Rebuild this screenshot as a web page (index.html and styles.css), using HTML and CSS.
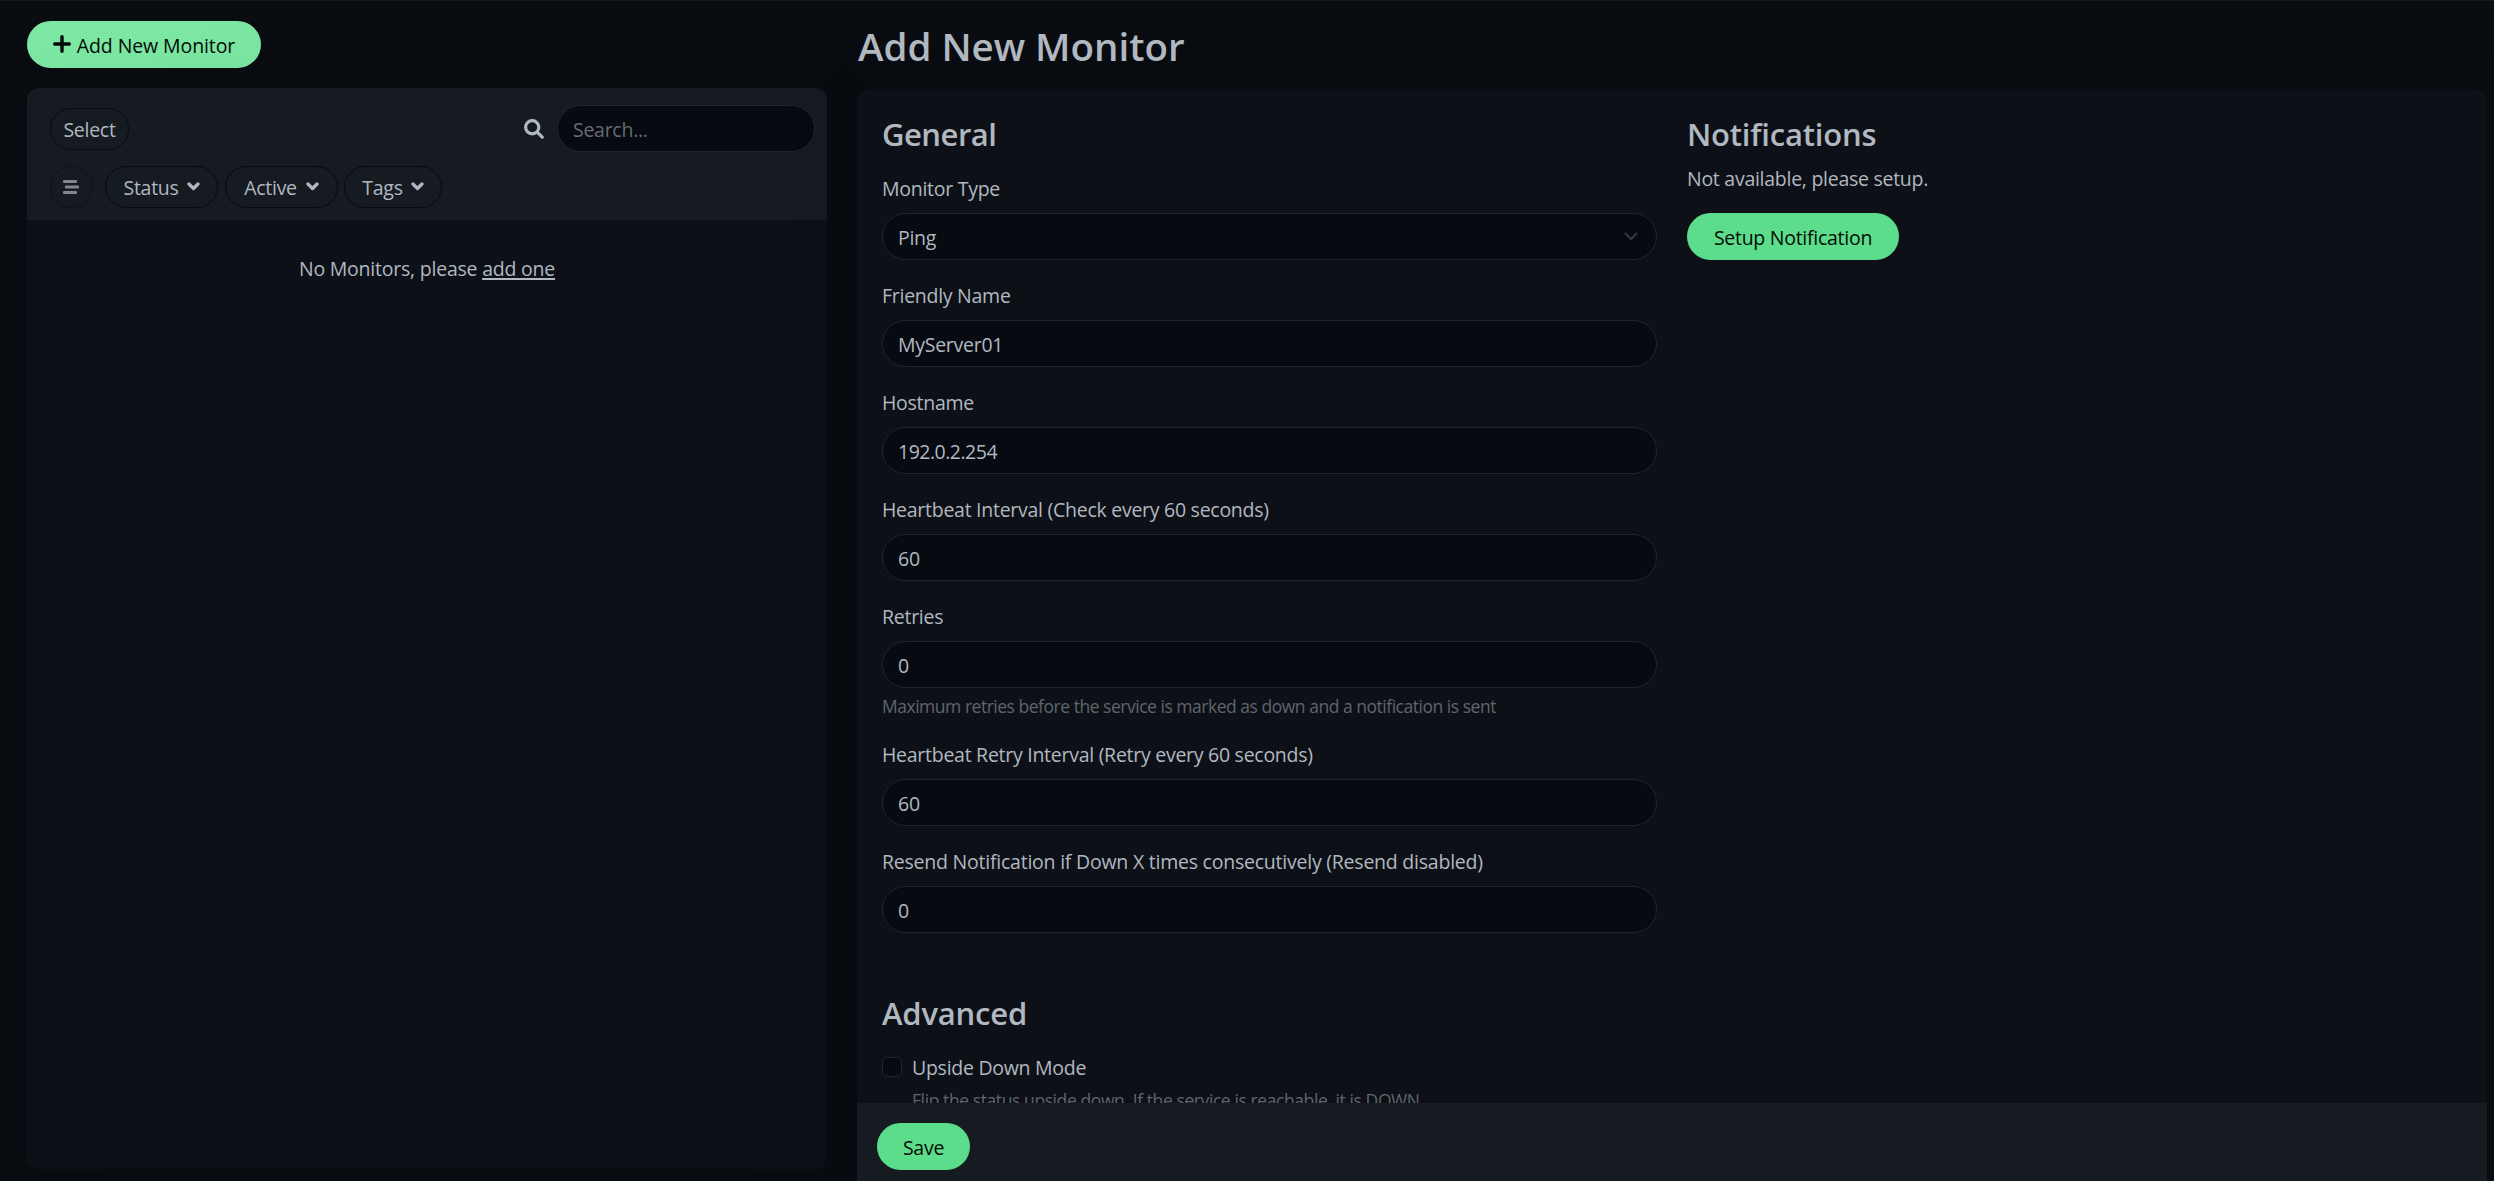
FILE: index.html
```html
<!DOCTYPE html>
<html lang="en">
<head>
<meta charset="utf-8">
<title>Add New Monitor</title>
<link rel="stylesheet" href="styles.css">
</head>
<body>
<div class="layout">
  <aside class="sidebar">
    <button class="btn btn-add"><svg class="icon-plus" viewBox="0 0 18 18"><path d="M9 1.700v14.600M1.700 9h14.600"/></svg><span>Add New Monitor</span></button>
    <section class="list">
      <header class="list-header">
        <div class="row row-search">
          <button class="pill pill-select"><span>Select</span></button>
          <div class="search">
            <svg class="icon-search" viewBox="0 0 20 20"><circle cx="8.200" cy="8.200" r="6.600"/><path d="M13.200 13.200l5 5"/></svg>
            <div class="input input-search"><span>Search...</span></div>
          </div>
        </div>
        <div class="row row-filter">
          <button class="pill pill-icon"><svg class="icon-bars" viewBox="0 0 16 14"><rect x="0" y="0" width="14" height="3" rx="1"/><rect x="2" y="5.500" width="14" height="3" rx="1"/><rect x="0" y="11" width="14" height="3" rx="1"/></svg></button>
          <button class="pill pill-status"><span>Status</span><svg class="icon-angle" viewBox="0 0 13 9"><path d="M2 2l4.500 4.500L11 2"/></svg></button>
          <button class="pill pill-active"><span>Active</span><svg class="icon-angle" viewBox="0 0 13 9"><path d="M2 2l4.500 4.500L11 2"/></svg></button>
          <button class="pill pill-tags"><span>Tags</span><svg class="icon-angle" viewBox="0 0 13 9"><path d="M2 2l4.500 4.500L11 2"/></svg></button>
        </div>
      </header>
      <p class="empty"><span>No Monitors, please <a>add one</a></span></p>
    </section>
  </aside>
  <main class="main">
    <h1>Add New Monitor</h1>
    <form class="card">
      <div class="columns">
        <div class="col">
          <h2>General</h2>
          <div class="field"><label>Monitor Type</label><div class="input input-select"><span>Ping</span><svg class="icon-chevron" viewBox="0 0 14 9"><path d="M1.500 1.500l5.500 5.500 5.500-5.500"/></svg></div></div>
          <div class="field"><label>Friendly Name</label><div class="input"><span>MyServer01</span></div></div>
          <div class="field"><label>Hostname</label><div class="input"><span class="ip">192.0.2.254</span></div></div>
          <div class="field"><label>Heartbeat Interval (Check every 60 seconds)</label><div class="input"><span>60</span></div></div>
          <div class="field field-help"><label>Retries</label><div class="input"><span>0</span></div><p class="help">Maximum retries before the service is marked as down and a notification is sent</p></div>
          <div class="field"><label>Heartbeat Retry Interval (Retry every 60 seconds)</label><div class="input"><span>60</span></div></div>
          <div class="field"><label class="resend">Resend Notification if Down X times consecutively (Resend disabled)</label><div class="input"><span>0</span></div></div>
          <h2 class="advanced">Advanced</h2>
          <div class="check"><i class="box"></i><div class="check-text"><label>Upside Down Mode</label><p class="help">Flip the status upside down. If the service is reachable, it is DOWN.</p></div></div>
        </div>
        <div class="col">
          <h2 class="notif">Notifications</h2>
          <p class="note">Not available, please setup.</p>
          <button type="button" class="btn btn-setup"><span>Setup Notification</span></button>
        </div>
      </div>
      <footer class="savebar"><button type="button" class="btn btn-save"><span>Save</span></button></footer>
    </form>
  </main>
</div>
</body>
</html>
```
FILE: styles.css
```css
* { box-sizing: border-box; }
body {
  margin: 0;
  height: 1181px;
  overflow: hidden;
  background: #090c10;
  border-top: 1px solid #161b22;
  color: #b1b8c0;
  font: 19.5px/30px "Open Sans", "Noto Sans", sans-serif;
  letter-spacing: -.27px;
}
h1, h2, p { margin: 0; }
span { white-space: nowrap; }
button { font: inherit; letter-spacing: inherit; color: inherit; padding: 0; border: 0; background: none; }
.layout { display: flex; gap: 30px; height: 1180px; padding: 0 7px 0 27px; }
.sidebar { width: 800px; padding-top: 20px; }
.btn { display: flex; align-items: center; justify-content: center; height: 47px; padding-top: 3px; border-radius: 24px; background: #5cdd8b; color: #020b05; }
.btn-add { width: 234px; gap: 6px; letter-spacing: -.1px; background: linear-gradient(135deg, #7ce8a4, #7ae6a2); }
.icon-plus { width: 18px; height: 18px; margin-top: -4px; fill: none; stroke: #020b05; stroke-width: 3.400; stroke-linecap: round; }
.list { height: 1081px; margin-top: 20px; border-radius: 12px; overflow: hidden; background: #0d1117; box-shadow: 0 15px 70px rgba(0, 0, 0, .1); }
.list-header { height: 132px; padding: 17px 12px 12px 23px; background: #161b22; }
.row { display: flex; align-items: center; }
.row-search { height: 47px; justify-content: space-between; }
.row-filter { margin-top: 14px; }
.pill { display: flex; align-items: center; justify-content: center; height: 42px; padding-top: 2px; border: 1px solid #070a10; border-radius: 21px; }
.pill-select { width: 79px; }
.pill-icon { width: 43px; margin-right: 12px; padding: 0; border-color: #0f1319; }
.pill-status, .pill-active { width: 113px; margin-right: 7px; gap: 9px; }
.pill-status { gap: 8px; }
.pill-active { margin-right: 6px; }
.pill-tags { width: 98px; gap: 8px; }
.icon-bars { width: 16px; height: 14px; margin-right: 1px; fill: #82878e; }
.icon-angle { width: 13px; height: 9px; margin-top: -3px; fill: none; stroke: #b1b8c0; stroke-width: 3.200; stroke-linecap: round; stroke-linejoin: round; }
.search { display: flex; align-items: center; gap: 13px; }
.icon-search { width: 20px; height: 20px; fill: none; stroke: #b1b8c0; stroke-width: 3.200; stroke-linecap: round; }
.input { display: flex; align-items: center; height: 47px; padding: 2px 15px 0; border: 1px solid #1d2634; border-radius: 24px; background: #070a10; }
.input-select { justify-content: space-between; padding-right: 18px; }
.icon-chevron { width: 14px; height: 9px; margin-top: -3px; fill: none; stroke: #343a40; stroke-width: 2; stroke-linecap: round; stroke-linejoin: round; }
.input-search { width: 258px; color: #666c73; }
.ip { letter-spacing: -.5px; }
.empty { margin-top: 34px; text-align: center; letter-spacing: -.22px; }
.empty a { text-decoration: underline; text-decoration-thickness: 2px; text-underline-offset: 2px; }
.main { width: 1630px; }
h1 { height: 88px; padding: 18px 0 0 1px; font-size: 38.5px; line-height: 54px; font-weight: 600; letter-spacing: 0; }
.card { height: 1092px; border-radius: 12px 12px 0 0; background: #0d1117; box-shadow: 0 15px 70px rgba(0, 0, 0, .1); overflow: hidden; }
.columns { display: grid; grid-template-columns: 775px 775px; column-gap: 30px; height: 1014px; padding: 23px 25px 0; overflow: hidden; }
h2 { height: 46px; font-size: 31px; line-height: 44px; font-weight: 600; letter-spacing: -.5px; }
h2.notif, h2.advanced { letter-spacing: -.2px; }
.field { height: 107px; padding-top: 14px; }
.field label { display: block; height: 41px; line-height: 33px; }
.field .resend { letter-spacing: -.23px; }
.field-help { height: 138px; }
.help { color: #5f656c; font-size: 17.5px; line-height: 24px; letter-spacing: -.48px; }
.field-help .help { padding-top: 6px; }
.advanced { margin-top: 53px; }
.check { display: flex; gap: 10px; margin-top: 17px; }
.box { width: 20px; height: 20px; margin-top: 3px; border: 1px solid #1d2634; border-radius: 5px; background: #070a10; }
.check-text label { display: block; line-height: 28px; }
.check-text .help { padding-top: 6px; letter-spacing: -.41px; }
.note { height: 30px; margin-top: 6px; }
.btn-setup { width: 212px; margin-top: 19px; }
.savebar { height: 78px; padding: 20px; background: #161b22; }
.btn-save { width: 93px; }
```
